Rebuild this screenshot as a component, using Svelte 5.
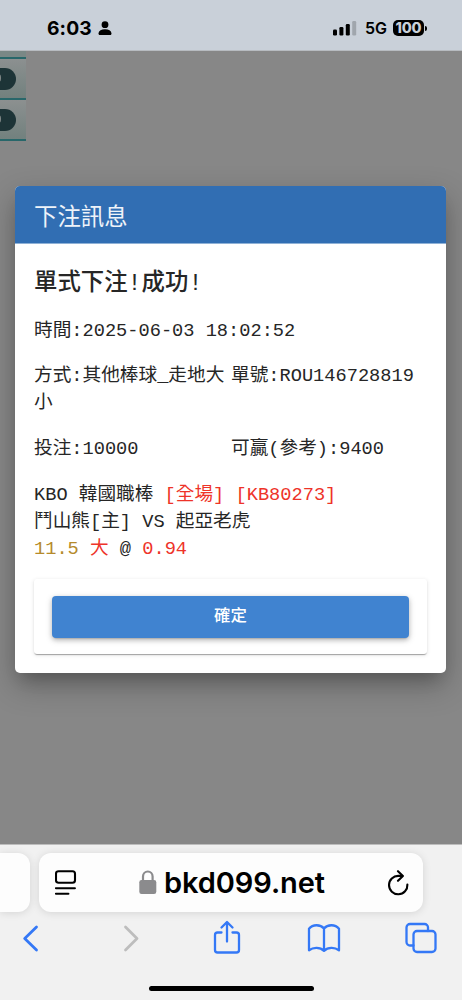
<script lang="ts">
  const time = '2025-06-03 18:02:52';
  const method = '其他棒球_走地大小';
  const ticket = 'ROU146728819';
  const stake = 10000;
  const payout = 9400;
  const host = 'bkd099.net';
  const menuRows = [0, 1];
</script>

<div class="phone">
  <header class="status">
    <div class="clock">
      <span>6:03</span>
      <svg width="14" height="15" viewBox="0 0 14 15">
        <circle cx="7" cy="3.700" r="3.400" />
        <path d="M.5 12.200C.8 9.700 3.300 8.300 7 8.300s6.200 1.400 6.500 3.900c.1 1-.4 1.800-1.400 1.800H1.900C.9 14 .4 13.200.5 12.200z" />
      </svg>
    </div>
    <div class="signal">
      <svg width="24" height="16" viewBox="0 0 24 16">
        <rect x="0" y="9.500" width="4" height="6" rx="1.200" />
        <rect x="6.400" y="7" width="4" height="8.500" rx="1.200" />
        <rect x="12.800" y="4" width="4" height="11.500" rx="1.200" />
        <rect x="19.200" y="1" width="4" height="14.500" rx="1.200" opacity=".2" />
      </svg>
      <span class="network">5G</span>
      <span class="battery">100</span>
      <i class="battery-cap"></i>
    </div>
  </header>

  <main>
    <div class="menu">
      <div class="menu-row first"></div>
      {#each menuRows as row (row)}
        <div class="menu-row"><i></i></div>
      {/each}
    </div>

    <section class="modal">
      <h1>下注訊息</h1>
      <div class="body">
        <h2>單式下注!成功!</h2>
        <p class="time">時間:{time}</p>
        <div class="pair">
          <p>方式:{method}</p>
          <p>單號:{ticket}</p>
        </div>
        <div class="pair">
          <p>投注:{stake}</p>
          <p>可贏(參考):{payout}</p>
        </div>
        <p class="bet">
          KBO 韓國職棒 <span class="red">[全場] [KB80273]</span><br />
          鬥山熊[主] VS 起亞老虎<br />
          <span class="gold">11.5</span> <span class="red">大</span> @ <span class="red">0.94</span>
        </p>
        <div class="actions">
          <button>確定</button>
        </div>
      </div>
    </section>
  </main>

  <footer>
    <div class="tabs">
      <div class="previous-tab"></div>
      <div class="address">
        <svg class="stroke" width="22" height="26" viewBox="0 0 22 26">
          <rect x="1" y="1.200" width="19" height="11.600" rx="2.500" />
          <path d="M.9 18.200h19M.9 23.700h12.500" stroke-linecap="round" />
        </svg>
        <div class="host">
          <svg width="18" height="25" viewBox="0 0 18 25">
            <rect x="0.300" y="10" width="17" height="14" rx="2.300" fill="#8b8b8d" />
            <path d="M4 11V6.500a4.800 5 0 0 1 9.600 0V11" fill="none" stroke="#8b8b8d" stroke-width="2.200" />
          </svg>
          <span>{host}</span>
        </div>
        <svg class="stroke" width="22" height="26" viewBox="0 0 22 26">
          <path d="M15 5.900H11.500A9.200 9.200 0 1 0 20.400 14.500" stroke-linecap="round" />
          <path d="M11 1.200l4.900 4.700-4.900 4.900" stroke-linecap="round" stroke-linejoin="round" />
        </svg>
      </div>
    </div>
    <nav>
      <svg width="34" height="36" viewBox="0 0 34 36">
        <path d="M22.500 7L10.700 18.500l11.800 11.500" />
      </svg>
      <svg class="disabled" width="34" height="36" viewBox="0 0 34 36">
        <path d="M13.500 7l11.500 11.500-11.500 11.500" />
      </svg>
      <svg class="thin" width="34" height="36" viewBox="0 0 34 36">
        <path d="M12.500 12.500H8.600a2.600 2.600 0 0 0-2.600 2.600v14.800a2.600 2.600 0 0 0 2.600 2.600h18.800a2.600 2.600 0 0 0 2.600-2.600V15.100a2.600 2.600 0 0 0-2.600-2.600h-3.900M18 21.500V2.500M12.500 7.500L18 2l5.500 5.500" />
      </svg>
      <svg class="thin" width="34" height="36" viewBox="0 0 34 36">
        <path d="M17 8.500C13.500 4.300 5.800 4 2 8.700v21.600c4.300-3.300 11-3.300 15 .5 4-3.800 10.700-3.800 15-.5V8.700C28.200 4 20.500 4.300 17 8.500zv22" />
      </svg>
      <svg class="thin" width="34" height="36" viewBox="0 0 34 36">
        <rect x="9.500" y="11" width="22" height="21" rx="3.500" />
        <path d="M9.500 25.500H6A3.500 3.500 0 0 1 2.500 22V7.500A3.500 3.500 0 0 1 6 4h14.500A3.500 3.500 0 0 1 24 7.500V11" />
      </svg>
    </nav>
    <div class="home"></div>
  </footer>
</div>

<style>
  :global(body) {
    margin: 0;
  }

  .phone {
    display: flex;
    flex-direction: column;
    width: 462px;
    height: 1000px;
    overflow: hidden;
    background: #878787;
    font-family: Inter, 'Noto Sans CJK TC', sans-serif;
  }

  .status {
    display: flex;
    justify-content: space-between;
    box-sizing: border-box;
    height: 51px;
    padding: 18px 35px 0 47px;
    background: #c9d0d9;
    border-bottom: 1px solid #b7bbc0;
  }

  .clock,
  .signal {
    display: flex;
    height: 20px;
    align-items: center;
  }

  .clock {
    gap: 6px;
    font-size: 19.3px;
    font-weight: 700;
    letter-spacing: 0.1px;
  }

  .network {
    margin: 0 6px 0 8px;
    font-size: 16px;
    font-weight: 600;
  }

  .battery {
    width: 31px;
    height: 16px;
    border-radius: 5px;
    background: #000;
    color: #c9d0d9;
    font-size: 14.5px;
    font-weight: 800;
    line-height: 16px;
    text-align: center;
    letter-spacing: -0.2px;
  }

  .battery-cap {
    width: 2px;
    height: 5px;
    margin-left: 1px;
    border-radius: 0 2px 2px 0;
    background: #000;
  }

  main {
    position: relative;
    box-sizing: border-box;
    height: 793px;
    padding: 135px 16px 0 15px;
  }

  .menu {
    position: absolute;
    top: 0;
    left: 0;
    width: 26px;
  }

  .menu-row {
    display: flex;
    align-items: center;
    box-sizing: border-box;
    height: 41px;
    border-bottom: 2px solid #28676a;
    background: linear-gradient(#8c9090, #72817e);
  }

  .menu-row.first {
    height: 8px;
    background: #7a8886;
  }

  .menu-row i {
    position: relative;
    width: 16px;
    height: 22px;
    border-radius: 0 11px 11px 0;
    background: #1d3437;
    overflow: hidden;
  }

  .menu-row i::before {
    content: '';
    position: absolute;
    top: 6px;
    left: -5px;
    width: 6px;
    height: 8px;
    border-radius: 4px;
    background: #7d8584;
  }

  .modal {
    position: relative;
    box-sizing: border-box;
    height: 487px;
    border-radius: 5px;
    overflow: hidden;
    background: #fff;
    box-shadow: 0 11px 16px -7px rgba(0, 0, 0, 0.2), 0 12px 30px 1px rgba(0, 0, 0, 0.25);
    color: #262626;
    font-family: 'Liberation Mono', 'Noto Sans CJK TC', monospace;
    font-size: 18.67px;
    line-height: 27px;
  }

  h1 {
    box-sizing: border-box;
    height: 58px;
    margin: 0;
    padding: 3px 0 0 19px;
    background: #316eb3;
    border-bottom: 0.5px solid #8fb1d6;
    color: #eef3f9;
    font-size: 23.4px;
    font-weight: 400;
    line-height: 60px;
  }

  .body {
    padding: 24px 19px 0;
  }

  h2 {
    margin: 0 0 17px;
    font-size: 23.4px;
    font-weight: 500;
    line-height: 33px;
  }

  p {
    margin: 0 0 19px;
  }

  .time {
    margin-bottom: 18px;
  }

  .pair {
    display: grid;
    grid-template-columns: 197px 1fr;
  }

  .pair p {
    white-space: nowrap;
  }

  .pair p:first-child {
    white-space: normal;
    word-break: break-all;
  }

  .bet {
    margin-bottom: 16px;
  }

  .red {
    color: #ee3329;
  }

  .gold {
    color: #b58a2b;
  }

  .actions {
    box-sizing: border-box;
    height: 75px;
    padding: 17px 18px;
    border-radius: 3px;
    box-shadow: 0 2px 1px -1px rgba(0, 0, 0, 0.2), 0 1px 1px rgba(0, 0, 0, 0.14), 0 1px 4px rgba(0, 0, 0, 0.12);
  }

  button {
    display: block;
    width: 100%;
    height: 42px;
    padding: 0 0 7px;
    border: 0;
    border-radius: 4px;
    background: #4083d0;
    box-shadow: 0 3px 1px -2px rgba(0, 0, 0, 0.1), 0 2px 4px rgba(0, 0, 0, 0.16), 0 2px 7px rgba(0, 0, 0, 0.18);
    color: #fff;
    font-family: 'Noto Sans CJK TC', sans-serif;
    font-size: 16.4px;
    font-weight: 500;
  }

  footer {
    position: relative;
    display: flex;
    flex: 1;
    flex-direction: column;
    box-sizing: border-box;
    padding-top: 8px;
    border-top: 1px solid #bdbdbd;
    background: #f1f1f1;
  }

  .tabs {
    display: flex;
    gap: 9px;
    height: 59px;
  }

  .previous-tab,
  .address {
    background: #fdfdfd;
    box-shadow: 0 1px 9px rgba(0, 0, 0, 0.12);
  }

  .previous-tab {
    width: 30px;
    border-radius: 0 12px 12px 0;
  }

  .address {
    display: flex;
    align-items: center;
    justify-content: space-between;
    box-sizing: border-box;
    width: 384px;
    padding: 0 14px 0 16px;
    border-radius: 12px;
  }

  .stroke {
    fill: none;
    stroke: #000;
    stroke-width: 2.1;
  }

  .host {
    display: flex;
    align-items: center;
    gap: 7px;
    font-size: 29px;
    font-weight: 600;
    letter-spacing: -0.1px;
  }

  nav {
    display: flex;
    justify-content: space-between;
    padding: 8px 24px 0 14px;
  }

  nav svg {
    fill: none;
    stroke: #3478f6;
    stroke-width: 2.8;
    stroke-linecap: round;
    stroke-linejoin: round;
  }

  nav .thin {
    stroke-width: 2.3;
  }

  nav .disabled {
    stroke: #bdbdbd;
  }

  .home {
    width: 165px;
    height: 5px;
    margin: 30px auto 0;
    border-radius: 3px;
    background: #000;
  }
</style>
